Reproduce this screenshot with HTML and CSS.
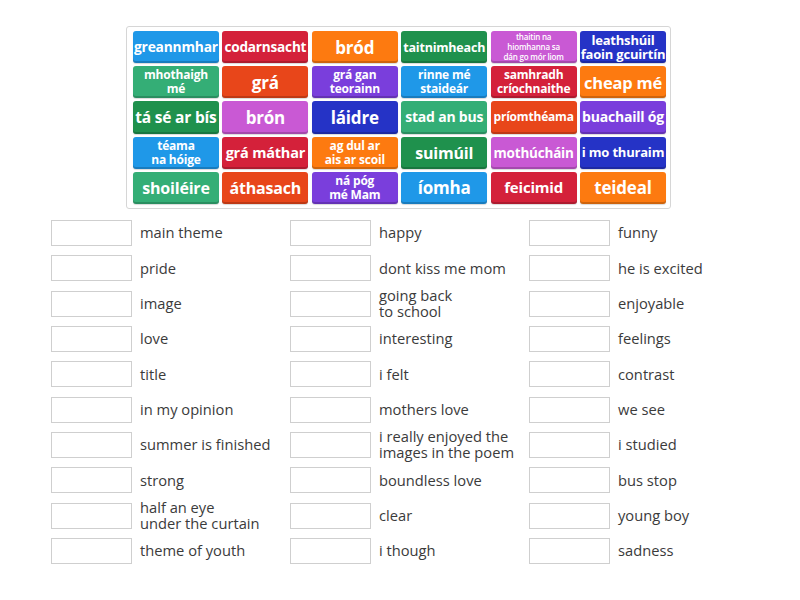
FILE: index.html
```html
<!DOCTYPE html>
<html>
<head>
<meta charset="utf-8">
<link rel="stylesheet" href="styles.css">
</head>
<body>
<div class="page">
  <div class="bank">
    <div class="tile c-blue s138">greannmhar</div>
    <div class="tile c-crimson s136">codarnsacht</div>
    <div class="tile c-orange s17">bród</div>
    <div class="tile c-green s125">taitnimheach</div>
    <div class="tile c-orchid s8">thaitin na<br>hiomhanna sa<br>dán go mór liom</div>
    <div class="tile c-navy s13">leathshúil<br>faoin gcuirtín</div>

    <div class="tile c-mint s12">mhothaigh<br>mé</div>
    <div class="tile c-red s17">grá</div>
    <div class="tile c-purple s12">grá gan<br>teorainn</div>
    <div class="tile c-blue s12">rinne mé<br>staideár</div>
    <div class="tile c-crimson s12">samhradh<br>críochnaithe</div>
    <div class="tile c-orange s165">cheap mé</div>

    <div class="tile c-green s155">tá sé ar bís</div>
    <div class="tile c-orchid s17">brón</div>
    <div class="tile c-navy s17">láidre</div>
    <div class="tile c-mint s14">stad an bus</div>
    <div class="tile c-red s12">príomthéama</div>
    <div class="tile c-purple s14">buachaill óg</div>

    <div class="tile c-blue s12">téama<br>na hóige</div>
    <div class="tile c-crimson s145">grá máthar</div>
    <div class="tile c-orange s12">ag dul ar<br>ais ar scoil</div>
    <div class="tile c-green s16">suimúil</div>
    <div class="tile c-orchid s135">mothúcháin</div>
    <div class="tile c-navy s13">i mo thuraim</div>

    <div class="tile c-mint s16">shoiléire</div>
    <div class="tile c-red s16">áthasach</div>
    <div class="tile c-purple s12">ná póg<br>mé Mam</div>
    <div class="tile c-blue s17">íomha</div>
    <div class="tile c-crimson s15">feicimid</div>
    <div class="tile c-orange s17">teideal</div>
  </div>

  <div class="answers">
    <div class="item"><div class="box"></div><div class="label">main theme</div></div>
    <div class="item"><div class="box"></div><div class="label">happy</div></div>
    <div class="item"><div class="box"></div><div class="label">funny</div></div>

    <div class="item"><div class="box"></div><div class="label">pride</div></div>
    <div class="item"><div class="box"></div><div class="label">dont kiss me mom</div></div>
    <div class="item"><div class="box"></div><div class="label">he is excited</div></div>

    <div class="item"><div class="box"></div><div class="label">image</div></div>
    <div class="item"><div class="box"></div><div class="label">going back<br>to school</div></div>
    <div class="item"><div class="box"></div><div class="label">enjoyable</div></div>

    <div class="item"><div class="box"></div><div class="label">love</div></div>
    <div class="item"><div class="box"></div><div class="label">interesting</div></div>
    <div class="item"><div class="box"></div><div class="label">feelings</div></div>

    <div class="item"><div class="box"></div><div class="label">title</div></div>
    <div class="item"><div class="box"></div><div class="label">i felt</div></div>
    <div class="item"><div class="box"></div><div class="label">contrast</div></div>

    <div class="item"><div class="box"></div><div class="label">in my opinion</div></div>
    <div class="item"><div class="box"></div><div class="label">mothers love</div></div>
    <div class="item"><div class="box"></div><div class="label">we see</div></div>

    <div class="item"><div class="box"></div><div class="label">summer is finished</div></div>
    <div class="item"><div class="box"></div><div class="label">i really enjoyed the<br>images in the poem</div></div>
    <div class="item"><div class="box"></div><div class="label">i studied</div></div>

    <div class="item"><div class="box"></div><div class="label">strong</div></div>
    <div class="item"><div class="box"></div><div class="label">boundless love</div></div>
    <div class="item"><div class="box"></div><div class="label">bus stop</div></div>

    <div class="item"><div class="box"></div><div class="label">half an eye<br>under the curtain</div></div>
    <div class="item"><div class="box"></div><div class="label">clear</div></div>
    <div class="item"><div class="box"></div><div class="label">young boy</div></div>

    <div class="item"><div class="box"></div><div class="label">theme of youth</div></div>
    <div class="item"><div class="box"></div><div class="label">i though</div></div>
    <div class="item"><div class="box"></div><div class="label">sadness</div></div>
  </div>
</div>
</body>
</html>
```

FILE: styles.css
```css
html, body {
  margin: 0;
  padding: 0;
  background: #ffffff;
}

.page {
  width: 800px;
  height: 600px;
  padding-top: 26px;
  box-sizing: border-box;
  font-family: "Open Sans", "Liberation Sans", sans-serif;
}

.bank {
  margin-left: 126px;
  width: 545px;
  height: 183px;
  box-sizing: border-box;
  border: 1px solid #d6d6d6;
  border-radius: 3px;
  padding: 4px 4px 4px 6px;
  display: grid;
  grid-template-columns: repeat(6, 1fr);
  grid-template-rows: repeat(5, 1fr);
  column-gap: 3.5px;
  row-gap: 3.2px;
  background: #fff;
}

.tile {
  border-radius: 3px;
  color: #fff;
  font-weight: 700;
  display: flex;
  align-items: center;
  justify-content: center;
  text-align: center;
  white-space: nowrap;
  overflow: hidden;
  box-shadow: inset 0 -2px 0 rgba(0, 0, 0, 0.18), 0 1px 1px rgba(0, 0, 0, 0.15);
  letter-spacing: -0.2px;
}

.s8 { font-size: 8px; line-height: 10px; font-weight: 600; }
.s12 { font-size: 12px; line-height: 14px; }
.s125 { font-size: 12.5px; line-height: 15px; }
.s13 { font-size: 13px; line-height: 14.5px; }
.s135 { font-size: 13.5px; line-height: 16px; }
.s136 { font-size: 13.6px; line-height: 16px; }
.s138 { font-size: 13.8px; line-height: 16px; }
.s14 { font-size: 14px; line-height: 16px; }
.s145 { font-size: 14.5px; line-height: 17px; }
.s15 { font-size: 15px; line-height: 17px; }
.s155 { font-size: 15.5px; line-height: 18px; }
.s16 { font-size: 16px; line-height: 18px; }
.s165 { font-size: 16.5px; line-height: 19px; }
.s17 { font-size: 17px; line-height: 19px; }

.c-blue { background: #1f98e8; }
.c-crimson { background: #d4213a; }
.c-orange { background: #fd7a10; }
.c-green { background: #1f914d; }
.c-orchid { background: #c959d4; }
.c-navy { background: #2533c6; }
.c-mint { background: #34ae76; }
.c-red { background: #e8461a; }
.c-purple { background: #7a3edc; }

.answers {
  margin-top: 11px;
  margin-left: 51px;
  display: grid;
  grid-template-columns: repeat(3, 239px);
  grid-auto-rows: 26px;
  row-gap: 9.33px;
}

.item {
  display: flex;
  align-items: center;
}

.box {
  width: 81px;
  height: 26px;
  box-sizing: border-box;
  border: 1px solid #cfcfcf;
  background: #fff;
  flex: none;
}

.label {
  margin-left: 8px;
  font-size: 14.7px;
  line-height: 16.5px;
  color: #3b3b3b;
  white-space: nowrap;
  margin-top: -1px;
}
```
